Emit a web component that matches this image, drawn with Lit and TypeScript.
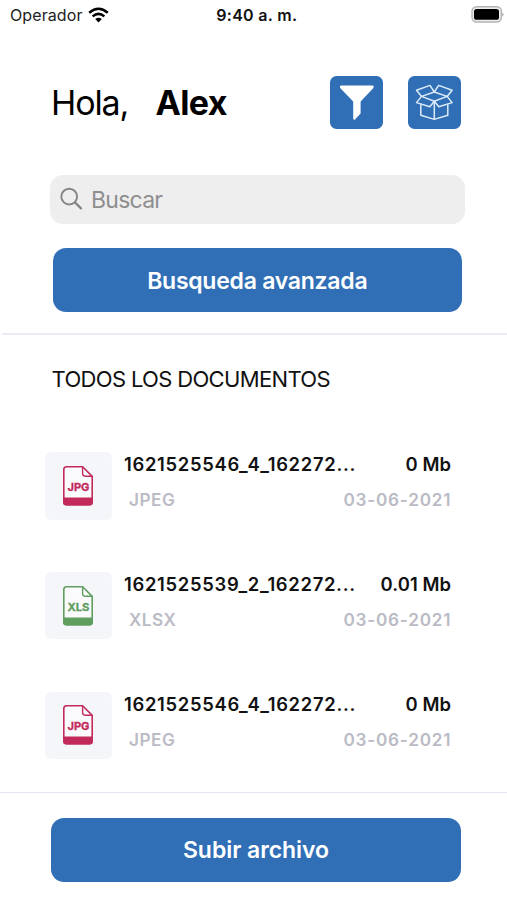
import { LitElement, html, css, svg } from "lit";
import { customElement, property } from "lit/decorators.js";

interface Doc {
  name: string;
  size: string;
  type: string;
  date: string;
  label: string;
  color: string;
}

const DOCS: Doc[] = [
  { name: "1621525546_4_162272...", size: "0 Mb", type: "JPEG", date: "03-06-2021", label: "JPG", color: "#c22a5c" },
  { name: "1621525539_2_162272...", size: "0.01 Mb", type: "XLSX", date: "03-06-2021", label: "XLS", color: "#5f9e5f" },
  { name: "1621525546_4_162272...", size: "0 Mb", type: "JPEG", date: "03-06-2021", label: "JPG", color: "#c22a5c" },
];

@customElement("file-icon")
class FileIcon extends LitElement {
  @property() label = "";
  @property() color = "";

  static styles = css`
    :host { display: block; width: 32px; height: 42px; }
    svg { display: block; }
    .label { font: 700 11px Inter, sans-serif; }
  `;

  render() {
    return html`<svg width="32" height="42" viewBox="0 0 32 42">
      ${svg`
        <path d="M20.6 1.7H4.6Q1.8 1.7 1.8 4.5V37Q1.8 39.7 4.6 39.7H27.4Q30.2 39.7 30.2 37V11.4Z"
          fill="#fbfbfd" stroke=${this.color} stroke-width="1.6" stroke-linejoin="round"/>
        <path d="M20.6 2.2V8.6Q20.6 11.2 23.2 11.2H30" fill="none" stroke=${this.color} stroke-width="1.4"/>
        <path d="M1.2 32.4H30.8V37.2Q30.8 40.5 27.5 40.5H4.5Q1.2 40.5 1.2 37.2Z" fill=${this.color}/>
        <text class="label" x="16.4" y="26" text-anchor="middle" textLength="22"
          lengthAdjust="spacingAndGlyphs" fill=${this.color} stroke=${this.color} stroke-width="0.3">${this.label}</text>`}
    </svg>`;
  }
}

@customElement("doc-row")
class DocRow extends LitElement {
  @property({ attribute: false }) doc!: Doc;

  static styles = css`
    :host { display: flex; height: 67.5px; padding: 0 55.8px 0 44.7px; }
    .tile {
      width: 67.8px; height: 67.5px; border-radius: 6px; background: #f4f6fa;
      display: flex; align-items: center; justify-content: center; flex: none;
    }
    file-icon { margin-right: 1px; }
    .info { flex: 1; margin: -0.8px 0 0 11.5px; white-space: nowrap; }
    .line { display: flex; justify-content: space-between; }
    .main { height: 26px; line-height: 26px; font-size: 18.4px; font-weight: 600; color: #111; }
    .name { letter-spacing: 0.7px; }
    .size { letter-spacing: 0.1px; }
    .sub {
      height: 26px; line-height: 26px; margin-top: 10px; padding-left: 5px;
      font-size: 17.2px; font-weight: 600; color: #bbbbc6;
    }
    .type { letter-spacing: 0.5px; }
    .date { letter-spacing: 0.75px; }
  `;

  render() {
    const d = this.doc;
    return html`
      <div class="tile"><file-icon label=${d.label} color=${d.color}></file-icon></div>
      <div class="info">
        <div class="line main"><span class="name">${d.name}</span><span class="size">${d.size}</span></div>
        <div class="line sub"><span class="type">${d.type}</span><span class="date">${d.date}</span></div>
      </div>`;
  }
}

@customElement("app-root")
class AppRoot extends LitElement {
  static styles = css`
    :host {
      display: flex; flex-direction: column; box-sizing: border-box; height: 900px; overflow: hidden;
      background: #fff; font-family: Inter, "Liberation Sans", sans-serif; color: #000;
    }
    svg { display: block; }
    .status {
      display: grid; grid-template-columns: 1fr auto 1fr; align-items: center;
      height: 30px; padding: 0 3.5px 0 10px; flex: none; white-space: nowrap;
    }
    .carrier { display: flex; align-items: center; gap: 5.5px; font-size: 16px; letter-spacing: 0.1px; color: #222; }
    .time { font-size: 16px; font-weight: 600; color: #111; letter-spacing: 0.3px; }
    .battery { justify-self: end; }
    .head { display: flex; height: 53px; margin: 45.5px 46.3px 0 51px; align-items: center; flex: none; }
    .hello { font-size: 34px; letter-spacing: -1.1px; width: 104.4px; }
    .user { font-size: 34px; font-weight: 700; letter-spacing: -0.6px; }
    .actions { display: flex; gap: 24.5px; margin-left: auto; }
    .action {
      width: 53px; height: 53px; border-radius: 6.5px; background: #306fb6;
      display: flex; align-items: center; justify-content: center;
    }
    .search {
      display: flex; align-items: center; gap: 7px; height: 48.5px; margin: 46.5px 42px 0 50px;
      padding-left: 10px; box-sizing: border-box; border-radius: 13px; background: #eee;
      font-size: 23px; letter-spacing: -0.75px; color: #8e8e90; flex: none;
    }
    .ph { padding-top: 1.5px; }
    .button {
      display: flex; align-items: center; justify-content: center; height: 63.5px; border-radius: 13px;
      background: #306fb6; color: #fff; font-size: 23px; font-weight: 600; flex: none;
    }
    .advanced { margin: 24.5px 45px 0 52.5px; letter-spacing: -0.25px; }
    .advanced span { padding-top: 1.5px; }
    .rule { height: 2px; margin: 21.5px 0 0 2px; background: #e9ecf3; flex: none; }
    .title { height: 30px; line-height: 30px; margin: 29px 0 0 51.5px; font-size: 22px; letter-spacing: -0.66px; color: #111; flex: none; }
    .list { display: flex; flex-direction: column; gap: 52.2px; margin-top: 58.2px; flex: none; }
    .bottom { margin-top: auto; height: 107px; border-top: 1px solid #e2e5f2; flex: none; }
    .upload { margin: 25px 46px 0 51px; letter-spacing: -0.05px; }
  `;

  render() {
    return html`
      <div class="status">
        <div class="carrier"><span class="op">Operador</span>
          <svg width="21" height="16" viewBox="0 0 21 16" fill="none" stroke="#000" stroke-width="2.5">
            <path d="M1.2 5.8Q10.5 -2.2 19.8 5.8"/>
            <path d="M4.6 9.4Q10.5 4.4 16.4 9.4"/>
            <path d="M7.2 12.1Q10.5 9.3 13.8 12.1L10.5 15.4Z" fill="#000" stroke="none"/>
          </svg>
        </div>
        <div class="time">9:40 a. m.</div>
        <svg class="battery" width="33" height="18" viewBox="0 0 33 18">
          <rect x="1" y="0.8" width="29.4" height="15.2" rx="4.5" fill="#eee" stroke="#b4b4b4" stroke-width="1.4"/>
          <rect x="3" y="3" width="25" height="10.8" rx="2.6" fill="#000"/>
          <path d="M31.4 6.4Q33.6 8.4 31.4 10.6Z" fill="#999"/>
        </svg>
      </div>
      <div class="head">
        <span class="hello">Hola,</span><span class="user">Alex</span>
        <div class="actions">
          <div class="action">
            <svg width="53" height="53" viewBox="0 0 53 53">
              <path d="M11.2 9.6H42.4Q44.5 9.8 43.2 12.2L30.6 25.6V37.4L25 43.4Q23.2 44.2 23.2 42.2V25.6L10.4 12.2Q9.2 10 11.2 9.6Z" fill="#fff"/>
            </svg>
          </div>
          <div class="action">
            <svg width="53" height="53" viewBox="0.5 0.2 53 53" fill="none" stroke="#dcebfa" stroke-width="1.5" stroke-linejoin="round">
              <path d="M14 20.6L26.8 16.2L39.6 20.6L26.8 25.4Z"/>
              <path d="M14 20.6L9 14.5L22.5 9.6L26.8 16.2L31.1 9.6L44.6 14.5L39.6 20.6L44.6 26.8L31.3 31L26.8 25.4L22.3 31L9 26.8Z"/>
              <path d="M13.3 28.6V39.4L26.8 43.6L40.3 39.4V28.6M26.8 25.4V43.6"/>
            </svg>
          </div>
        </div>
      </div>
      <div class="search">
        <svg width="24" height="24" viewBox="0 0 24 24" fill="none" stroke="#858587" stroke-width="1.9" stroke-linecap="round">
          <circle cx="9.2" cy="9.6" r="7.9"/><path d="M15 15.4L21 21.4" stroke-width="2.2"/>
        </svg>
        <span class="ph">Buscar</span>
      </div>
      <div class="button advanced"><span>Busqueda avanzada</span></div>
      <div class="rule"></div>
      <div class="title"><span>TODOS LOS DOCUMENTOS</span></div>
      <div class="list">${DOCS.map((d) => html`<doc-row .doc=${d}></doc-row>`)}</div>
      <div class="bottom"><div class="button upload"><span>Subir archivo</span></div></div>
    `;
  }
}
